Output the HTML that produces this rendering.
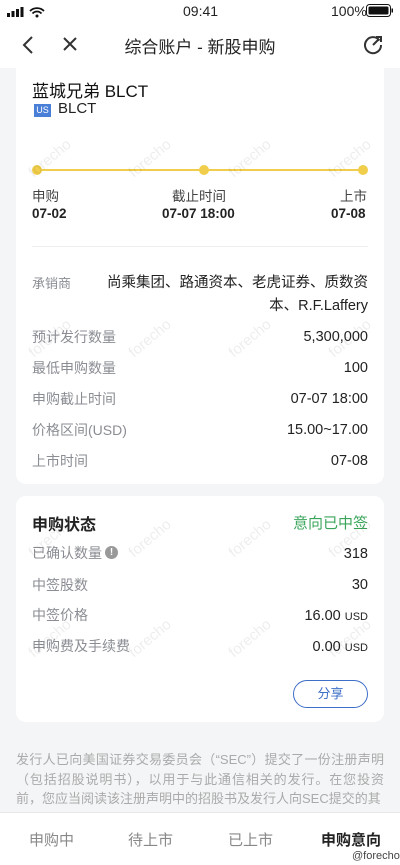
<!DOCTYPE html>
<html><head><meta charset="utf-8"><style>
*{margin:0;padding:0;box-sizing:border-box}
body{width:400px;height:865px;overflow:hidden;background:#f4f5f7;font-family:"Liberation Sans","Noto Sans CJK SC",sans-serif;position:relative;color:#222}
.a{position:absolute;white-space:nowrap}
.card{position:absolute;left:16px;width:368px;background:#fff;border-radius:10px}
.lbl{color:#8a8d93;font-size:14px}
.val{color:#222;font-size:14.5px;text-align:right;right:32px}
.wm{position:absolute;color:rgba(0,0,0,0.07);font-size:15px;transform:rotate(-40deg);pointer-events:none}
</style></head><body>
<div class="a" style="left:0;top:0;width:400px;height:68px;background:#fff"></div>
<svg class="a" style="left:7px;top:6px" width="40" height="12"><rect x="0" y="7" width="3" height="4" fill="#111"/><rect x="4.5" y="5" width="3" height="6" fill="#111"/><rect x="9" y="3" width="3" height="8" fill="#111"/><rect x="13.5" y="1" width="3" height="10" fill="#111"/><path d="M23 5a10 10 0 0 1 14 0M25.5 7.5a6 6 0 0 1 9 0" stroke="#111" stroke-width="1.8" fill="none"/><circle cx="30" cy="10" r="1.5" fill="#111"/></svg>
<div class="a" style="left:183px;top:3px;font-size:14px;font-weight:500">09:41</div>
<div class="a" style="left:331px;top:3px;font-size:14px">100%</div>
<svg class="a" style="left:366px;top:4px" width="28" height="14"><rect x="0.5" y="0.5" width="24" height="12" rx="3" fill="none" stroke="#111"/><rect x="2.5" y="2.5" width="20" height="8" rx="1.5" fill="#111"/><rect x="25.5" y="4.5" width="1.5" height="4" fill="#111"/></svg>
<svg class="a" style="left:18px;top:35px" width="60" height="20"><path d="M14 2L6 10l8 8" stroke="#333" stroke-width="2" fill="none"/><path d="M46 3l12 12M58 3L46 15" stroke="#333" stroke-width="2" fill="none"/></svg>
<div class="a" style="left:0;width:400px;text-align:center;top:33px;font-size:17px;color:#222">综合账户 - 新股申购</div>
<svg class="a" style="left:362px;top:34px" width="22" height="22"><path d="M17.5 6.5A8 8 0 1 0 19 11" stroke="#333" stroke-width="2" fill="none"/><path d="M11 11l6-6M14 3h5v5" stroke="#333" stroke-width="2" fill="none"/></svg>
<div class="card" style="top:68px;height:416px;border-radius:0 0 10px 10px"></div>
<div class="a" style="left:32px;top:77px;font-size:17px;color:#111">蓝城兄弟 BLCT</div>
<div class="a" style="left:34px;top:104px;width:17px;height:13px;background:#4a7fd8;color:#fff;font-size:9px;text-align:center;line-height:13px">US</div>
<div class="a" style="left:58px;top:100px;font-size:15px">BLCT</div>
<div class="a" style="left:36px;top:169px;width:328px;height:2px;background:#f0cd4a"></div>
<div class="a" style="left:32px;top:165px;width:10px;height:10px;border-radius:5px;background:#f0cd4a"></div>
<div class="a" style="left:199px;top:165px;width:10px;height:10px;border-radius:5px;background:#f0cd4a"></div>
<div class="a" style="left:358px;top:165px;width:10px;height:10px;border-radius:5px;background:#f0cd4a"></div>
<div class="a" style="left:32px;top:185px;font-size:13.5px;color:#444">申购</div>
<div class="a" style="left:172px;top:185px;font-size:13.5px;color:#444">截止时间</div>
<div class="a" style="left:340px;top:185px;font-size:13.5px;color:#444">上市</div>
<div class="a" style="left:32px;top:206px;font-size:13.5px;font-weight:bold">07-02</div>
<div class="a" style="left:162px;top:206px;font-size:13.5px;font-weight:bold">07-07 18:00</div>
<div class="a" style="left:331px;top:206px;font-size:13.5px;font-weight:bold">07-08</div>
<div class="a" style="left:32px;top:246px;width:336px;height:1px;background:#eee"></div>
<div class="a lbl" style="left:32px;top:273px;font-size:13px">承销商</div>
<div class="a" style="right:32px;top:272px;font-size:14.5px;text-align:right;line-height:23px">尚乘集团、路通资本、老虎证券、质数资<br>本、R.F.Laffery</div>
<div class="a lbl" style="left:32px;top:327px">预计发行数量</div><div class="a val" style="top:329px">5,300,000</div>
<div class="a lbl" style="left:32px;top:358px">最低申购数量</div><div class="a val" style="top:360px">100</div>
<div class="a lbl" style="left:32px;top:389px">申购截止时间</div><div class="a val" style="top:391px">07-07 18:00</div>
<div class="a lbl" style="left:32px;top:420px">价格区间(USD)</div><div class="a val" style="top:422px">15.00~17.00</div>
<div class="a lbl" style="left:32px;top:451px">上市时间</div><div class="a val" style="top:453px">07-08</div>
<div class="card" style="top:496px;height:226px"></div>
<div class="a" style="left:32px;top:511px;font-size:16px;font-weight:bold">申购状态</div>
<div class="a" style="right:32px;top:512px;font-size:15px;color:#3aa55a">意向已中签</div>
<div class="a lbl" style="left:32px;top:543px">已确认数量</div>
<div class="a" style="left:105px;top:546px;width:13px;height:13px;border-radius:7px;background:#999;color:#fff;font-size:10px;font-weight:bold;text-align:center;line-height:13px">!</div>
<div class="a val" style="top:546px">318</div>
<div class="a lbl" style="left:32px;top:575px">中签股数</div><div class="a val" style="top:577px">30</div>
<div class="a lbl" style="left:32px;top:605px">中签价格</div><div class="a val" style="top:608px">16.00 <span style="font-size:11px">USD</span></div>
<div class="a lbl" style="left:32px;top:636px">申购费及手续费</div><div class="a val" style="top:639px">0.00 <span style="font-size:11px">USD</span></div>
<div class="a" style="left:293px;top:680px;width:75px;height:28px;border:1.3px solid #3d6fc7;border-radius:14px;color:#3d6fc7;font-size:13px;text-align:center;line-height:26px">分享</div>
<div class="a" style="left:16px;top:750px;width:368px;white-space:normal;font-size:13px;color:#aaa;line-height:19.5px;text-align:justify">发行人已向美国证券交易委员会（“SEC”）提交了一份注册声明（包括招股说明书），以用于与此通信相关的发行。在您投资前，您应当阅读该注册声明中的招股书及发行人向SEC提交的其</div>
<div class="a" style="left:0;top:812px;width:400px;height:53px;background:#fff;border-top:1px solid #e8e8e8"></div>
<div class="a" style="left:29px;top:829px;font-size:15px;color:#888">申购中</div>
<div class="a" style="left:128px;top:829px;font-size:15px;color:#888">待上市</div>
<div class="a" style="left:228px;top:829px;font-size:15px;color:#888">已上市</div>
<div class="a" style="left:321px;top:829px;font-size:15px;color:#222;font-weight:bold">申购意向</div>
<div class="a" style="left:352px;top:850px;font-size:11px;color:#444">@forecho</div>
<div class="wm" style="left:25px;top:150px">forecho</div><div class="wm" style="left:125px;top:150px">forecho</div><div class="wm" style="left:225px;top:150px">forecho</div><div class="wm" style="left:325px;top:150px">forecho</div>
<div class="wm" style="left:25px;top:330px">forecho</div><div class="wm" style="left:125px;top:330px">forecho</div><div class="wm" style="left:225px;top:330px">forecho</div><div class="wm" style="left:325px;top:330px">forecho</div>
<div class="wm" style="left:25px;top:530px">forecho</div><div class="wm" style="left:125px;top:530px">forecho</div><div class="wm" style="left:225px;top:530px">forecho</div><div class="wm" style="left:325px;top:530px">forecho</div>
<div class="wm" style="left:25px;top:630px">forecho</div><div class="wm" style="left:125px;top:630px">forecho</div><div class="wm" style="left:225px;top:630px">forecho</div><div class="wm" style="left:325px;top:630px">forecho</div>
</body></html>
